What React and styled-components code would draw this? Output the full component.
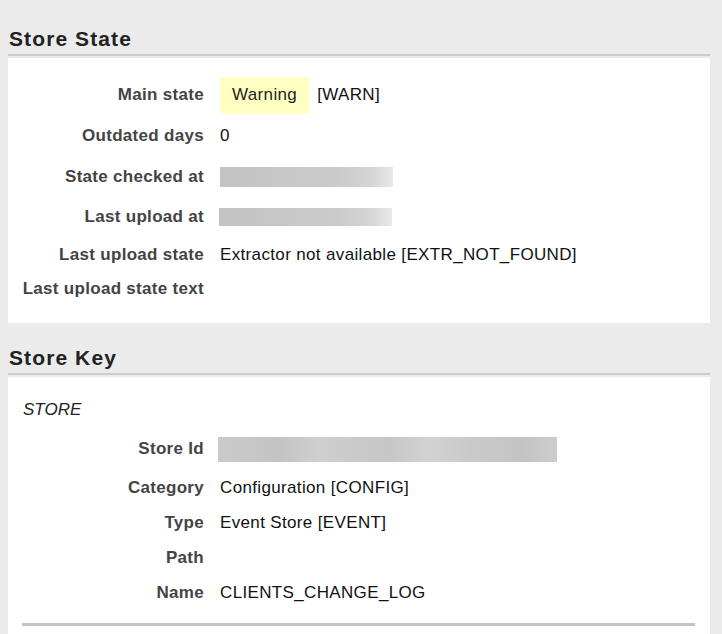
import React from 'react'
import styled, { createGlobalStyle } from 'styled-components'

const GlobalStyle = createGlobalStyle`
  html, body {
    margin: 0;
    padding: 0;
    background: #ebebeb;
  }
  body {
    font-family: "Liberation Sans", Arial, sans-serif;
  }
`

const Page = styled.div`
  padding: 27px 12px 0 8px;
  height: 100vh;
  box-sizing: border-box;
  display: flex;
  flex-direction: column;
  overflow: hidden;
`

const Heading = styled.h2`
  margin: ${p => (p.first ? '0' : '23px')} 0 2px 0;
  padding: 0 0 3px 1px;
  font-size: 21px;
  line-height: 24px;
  font-weight: bold;
  letter-spacing: 1.1px;
  color: #222;
  border-bottom: 2px solid #cbcbcb;
`

const Panel = styled.div`
  background: #fff;
  padding: ${p => p.pad || '16px 0 16px 0'};
  flex: ${p => (p.grow ? 1 : 'none')};
`

const Row = styled.div`
  display: grid;
  grid-template-columns: 196px 1fr;
  column-gap: 16px;
  align-items: center;
  height: ${p => p.h}px;
  font-size: 17px;
  line-height: 20px;
`

const Label = styled.div`
  text-align: right;
  font-weight: bold;
  color: #444;
  white-space: nowrap;
  letter-spacing: 0.3px;
`

const Value = styled.div`
  display: flex;
  align-items: center;
  color: #111;
  white-space: nowrap;
  letter-spacing: 0.35px;
`

const Badge = styled.span`
  display: inline-flex;
  align-items: center;
  height: 36px;
  padding: 0 12px 0 12px;
  margin-right: 8px;
  background: #ffffc2;
  color: #222;
`

const Redacted = styled.div`
  width: ${p => p.w}px;
  height: ${p => p.h}px;
  margin-left: ${p => p.dx || 0}px;
  background: ${p =>
    p.fade
      ? 'linear-gradient(90deg, #c3c3c3 0%, #c8c8c8 40%, #cbcbcb 70%, #d6d6d6 88%, #e8e8e8 100%)'
      : 'linear-gradient(90deg, #cacaca 0%, #c4c4c4 18%, #cfcfcf 30%, #c6c6c6 50%, #d2d2d2 62%, #cacaca 74%, #c4c4c4 90%, #cdcdcd 100%)'};
`

const Group = styled.div`
  height: 36px;
  display: flex;
  align-items: center;
  padding-left: 15px;
  font-size: 17px;
  font-style: italic;
  color: #222;
`

const Rule = styled.div`
  height: 3px;
  margin: 13px 15px 0 14px;
  background: #c4c4c4;
`

const keyRows = [
  { label: 'Category', value: 'Configuration [CONFIG]' },
  { label: 'Type', value: 'Event Store [EVENT]' },
  { label: 'Path', value: '' },
  { label: 'Name', value: 'CLIENTS_CHANGE_LOG' },
]

const App = () => {
  return (
    <>
      <GlobalStyle />
      <Page>
        <Heading first>Store State</Heading>
        <Panel pad="16px 0 18px 0">
          <Row h={41}>
            <Label>Main state</Label>
            <Value>
              <Badge>Warning</Badge>[WARN]
            </Value>
          </Row>
          <Row h={41}>
            <Label>Outdated days</Label>
            <Value>0</Value>
          </Row>
          <Row h={41}>
            <Label>State checked at</Label>
            <Value>
              <Redacted w={173} h={20} fade />
            </Value>
          </Row>
          <Row h={40}>
            <Label>Last upload at</Label>
            <Value>
              <Redacted w={173} h={18} dx={-1} fade />
            </Value>
          </Row>
          <Row h={36}>
            <Label>Last upload state</Label>
            <Value>Extractor not available [EXTR_NOT_FOUND]</Value>
          </Row>
          <Row h={32}>
            <Label>Last upload state text</Label>
            <Value />
          </Row>
        </Panel>

        <Heading>Store Key</Heading>
        <Panel pad="15px 0 0 0" grow>
          <Group>STORE</Group>
          <Row h={42}>
            <Label>Store Id</Label>
            <Value>
              <Redacted w={339} h={25} dx={-2} />
            </Value>
          </Row>
          {keyRows.map(r => (
            <Row key={r.label} h={35}>
              <Label>{r.label}</Label>
              <Value>{r.value}</Value>
            </Row>
          ))}
          <Rule />
        </Panel>
      </Page>
    </>
  )
}

export default App
